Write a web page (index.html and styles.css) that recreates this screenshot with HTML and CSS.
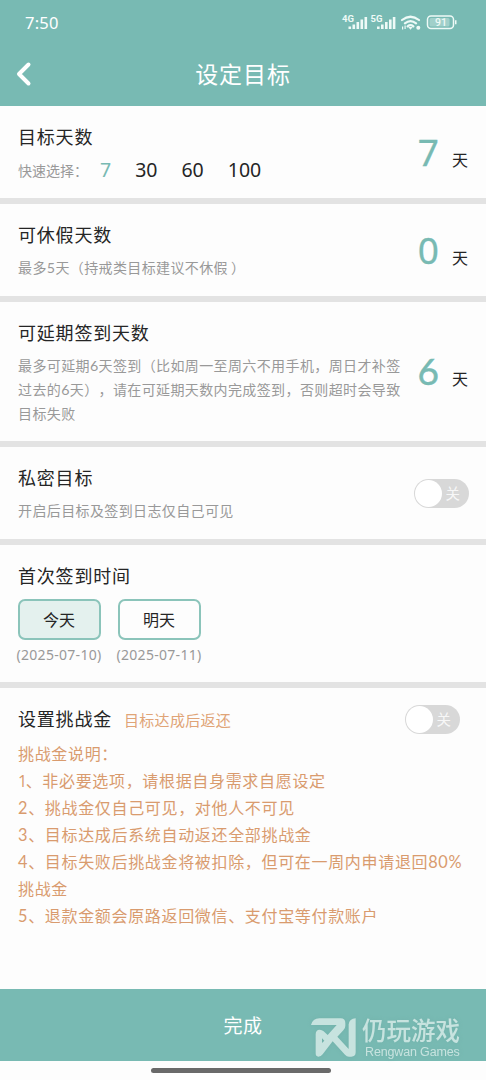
FILE: index.html
```html
<!DOCTYPE html>
<html lang="zh-CN">
<head>
<meta charset="utf-8">
<title>设定目标</title>
<link rel="stylesheet" href="styles.css">
</head>
<body>
<div class="app">
<header class="header">
  <div class="status">
    <span class="time">7:50</span>
    <svg class="status-icons" width="118" height="20" viewBox="0 0 118 20" fill="#eefaf7">
      <text x="1" y="10.500" class="net">4G</text>
      <path d="M7.500 15.500h2.600v2.500H7.500zM11.500 13.500h2.600v4.500h-2.600zM15.500 11h2.600v7h-2.600zM19.500 8.500h2.600v9.500h-2.600zM23.500 6h2.600v12h-2.600z"/>
      <text x="29.500" y="10.500" class="net">5G</text>
      <path d="M36 15.500h2.600v2.500h-2.600zM40 13.500h2.600v4.500h-2.600zM44 11h2.600v7h-2.600zM48 8.500h2.600v9.500h-2.600zM51.800 6h2.600v12h-2.600z"/>
      <g fill="none" stroke="#eefaf7" stroke-width="2.200" stroke-linecap="round"><path d="M61 9q8.500-6.500 17 0M63.900 12.400q5.600-4.500 11.200 0M66.600 15.300q2.900-2.200 5.800 0"/></g>
      <path d="M67.300 16l2.200 2.800 2.200-2.800zM61 15.500h1.200v3H61zM63.500 14.500h1.200v3.500h-1.200z"/><circle cx="77.300" cy="16.800" r="2"/>
      <rect x="86.500" y="5" width="26" height="12.500" rx="3.500" fill="none" stroke="#eefaf7" stroke-width="1.500"/>
      <rect x="88.500" y="7" width="20" height="8.500" rx="1.500" opacity=".35"/>
      <path d="M114 9.200h1.500v4H114z"/>
      <text x="94" y="15" class="battery">91</text>
    </svg>
  </div>
  <div class="nav">
    <svg class="back" width="17" height="26" viewBox="0 0 17 26"><path d="M13.500 3.500L4 13l9.500 9.500" fill="none" stroke="#fff" stroke-width="4" stroke-linecap="round" stroke-linejoin="round"/></svg>
    <h1 class="page-title">设定目标</h1>
  </div>
</header>
<main>
  <section class="row">
    <div class="info"><h2>目标天数</h2>
      <div class="desc quick"><span class="quick-label">快速选择：</span><span class="opt on">7</span><span class="opt">30</span><span class="opt">60</span><span class="opt">100</span></div>
    </div>
    <div class="value"><b>7</b><span>天</span></div>
  </section>
  <section class="row">
    <div class="info"><h2>可休假天数</h2><p class="desc">最多<i>5</i>天（持戒类目标建议不休假<span class="close">）</span></p></div>
    <div class="value"><b>0</b><span>天</span></div>
  </section>
  <section class="row tall">
    <div class="info"><h2>可延期签到天数</h2><p class="desc">最多可延期<i>6</i>天签到（比如周一至周六不用手机，周日才补签<br>过去的<i>6</i>天），请在可延期天数内完成签到，否则超时会导致<br>目标失败</p></div>
    <div class="value"><b class="six">6</b><span>天</span></div>
  </section>
  <section class="row">
    <div class="info"><h2>私密目标</h2><p class="desc">开启后目标及签到日志仅自己可见</p></div>
    <div class="toggle"><span>关</span></div>
  </section>
  <section class="row start">
    <div class="info"><h2>首次签到时间</h2>
      <div class="days">
        <div class="day"><div class="pick picked">今天</div><div class="date">(2025-07-10)</div></div>
        <div class="day"><div class="pick">明天</div><div class="date">(2025-07-11)</div></div>
      </div>
    </div>
  </section>
  <section class="fund">
    <div class="fund-head"><h2>设置挑战金</h2><span class="hint">目标达成后返还</span><div class="toggle"><span>关</span></div></div>
    <div class="notes">
      <p>挑战金说明：</p>
      <p><i class="one">1</i>、非必要选项，请根据自身需求自愿设定</p>
      <p><i>2</i>、挑战金仅自己可见，对他人不可见</p>
      <p><i>3</i>、目标达成后系统自动返还全部挑战金</p>
      <p><i>4</i>、目标失败后挑战金将被扣除，但可在一周内申请退回<i>80%</i><br>挑战金</p>
      <p><i>5</i>、退款金额会原路返回微信、支付宝等付款账户</p>
    </div>
  </section>
</main>
<footer>
  <div class="done">完成</div>
  <div class="home"><div class="pill"></div></div>
</footer>
<div class="mark">
  <svg width="47" height="40" viewBox="0 0 141 120" fill="none">
    <path d="M3 24Q8 4 28 4H92Q106 4 106 18V26Q106 34 100 40L82 59L116 96V22Q118 5 137 4V106Q137 119 124 119H117Q110 119 105 113L68 73L38 112Q33 119 25 119Q17 119 17 109V52Q17 38 29 38Q36 38 41 43L53 54L80 24ZM36 64V78L43 71Z" fill="#c7e3df" fill-rule="evenodd"/>
  </svg>
  <div class="mark-text"><div class="mark-cn">仍玩游戏</div><div class="mark-en">Rengwan Games</div></div>
</div>
</div>
</body>
</html>
```

FILE: styles.css
```css
* { box-sizing: border-box; }
body, h1, h2, p { margin: 0; font-weight: 400; }
body { background: #fdfdfd; font-family: "Noto Sans CJK SC", sans-serif; color: #252525; white-space: nowrap; text-spacing-trim: space-all; }
i { font: 400 1.02em/1 Lato, sans-serif; }
.one { font-family: "Open Sans", sans-serif; font-size: 1em; letter-spacing: -1.5px; }
.app { position: relative; width: 486px; height: 1080px; overflow: hidden; display: flex; flex-direction: column; }
.header { height: 106px; flex: none; background: #78bab3; color: #fff; }
.status { height: 44px; padding: 11px 27px 0 25px; display: flex; justify-content: space-between; }
.time { font: 400 16.5px/24px "Noto Sans", sans-serif; letter-spacing: .2px; }
.net { font: 700 9.500px Roboto, sans-serif; }
.battery { font: 500 10.500px Roboto, sans-serif; }
.nav { height: 60px; display: grid; grid-template-columns: 40px 1fr 40px; align-items: center; }
.back { margin-left: 15px; }
.page-title { text-align: center; font-size: 23px; line-height: 32px; letter-spacing: .9px; margin-top: -2px; }
main { flex: 1; }
.row { height: 98px; border-bottom: 6px solid #e3e3e3; padding: 16px 17px 0 18px; display: flex; justify-content: space-between; }
.row.tall { height: 145px; }
.row.start { height: 143px; }
h2 { font-size: 18px; line-height: 28px; letter-spacing: .8px; }
.desc { margin-top: 7px; font-size: 14px; line-height: 24px; letter-spacing: .38px; color: #999; }
.close { margin-left: 3px; }
.quick { display: flex; margin-top: 8px; }
.quick-label { width: 82px; letter-spacing: 0; }
.opt { font: 400 19.500px/24px "Noto Sans", sans-serif; letter-spacing: 0; color: #252525; margin-right: 24px; }
.opt.on { color: #78bab3; }
.value { align-self: center; display: flex; align-items: baseline; gap: 13px; margin: -16px 1px 0 0; }
.value b { font: 400 37px/44px "Noto Sans", sans-serif; color: #78bab3; -webkit-text-stroke: .3px #78bab3; }
.value .six { font-family: Lato, sans-serif; -webkit-text-stroke: .5px #78bab3; }
.value span { font-size: 16px; line-height: 24px; }
.tall .value { margin-top: -18px; }
.toggle { width: 55px; height: 29px; border-radius: 15px; background: #d8d8d8; display: flex; align-items: center; justify-content: flex-end; padding-right: 9px; color: #f7f7f7; position: relative; margin: 16px 0 0 0; }
.toggle span { font-size: 14.500px; line-height: 20px; margin-top: -2px; }
.toggle::before { content: ""; position: absolute; left: 1px; top: 1px; width: 27px; height: 27px; border-radius: 50%; background: #fff; }
.days { display: flex; gap: 17px; margin: 10px 0 0 -.5px; }
.day { width: 83px; }
.pick { height: 41px; border: 2px solid #8bc4ba; border-radius: 7px; text-align: center; font-size: 16px; line-height: 36px; }
.picked { background: #e4f1ee; }
.date { margin: 3px -5px 0 -5px; text-align: center; font: 400 14px/24px "Noto Sans", sans-serif; letter-spacing: .3px; color: #999; }
.fund { padding: 16px 26px 0 18px; }
.fund-head { display: flex; height: 28px; }
.hint { margin-left: 12px; font-size: 15px; line-height: 31px; letter-spacing: .3px; color: #e0a477; }
.fund-head .toggle { margin: 1px 0 0 auto; }
.notes { margin-top: 8px; font-size: 16px; line-height: 27px; letter-spacing: .67px; color: #d99b6e; }
footer { flex: none; height: 91px; }
.done { height: 72px; background: #78bab3; color: #fff; text-align: center; font-size: 19px; line-height: 72px; letter-spacing: .5px; }
.home { height: 19px; padding: 7px 0 0 151px; }
.pill { width: 180px; height: 5px; border-radius: 3px; background: #696969; }
.mark { position: absolute; left: 310px; top: 1017px; display: flex; gap: 5px; color: #c7e3df; filter: drop-shadow(0 0 2px #6aa49e66); }
.mark-cn { font-size: 24.500px; line-height: 25px; height: 27px; font-weight: 500; }
.mark-en { font: 400 12.500px/15px "Liberation Sans", sans-serif; margin-left: 3px; padding-top: 1px; letter-spacing: -.15px; }
```
